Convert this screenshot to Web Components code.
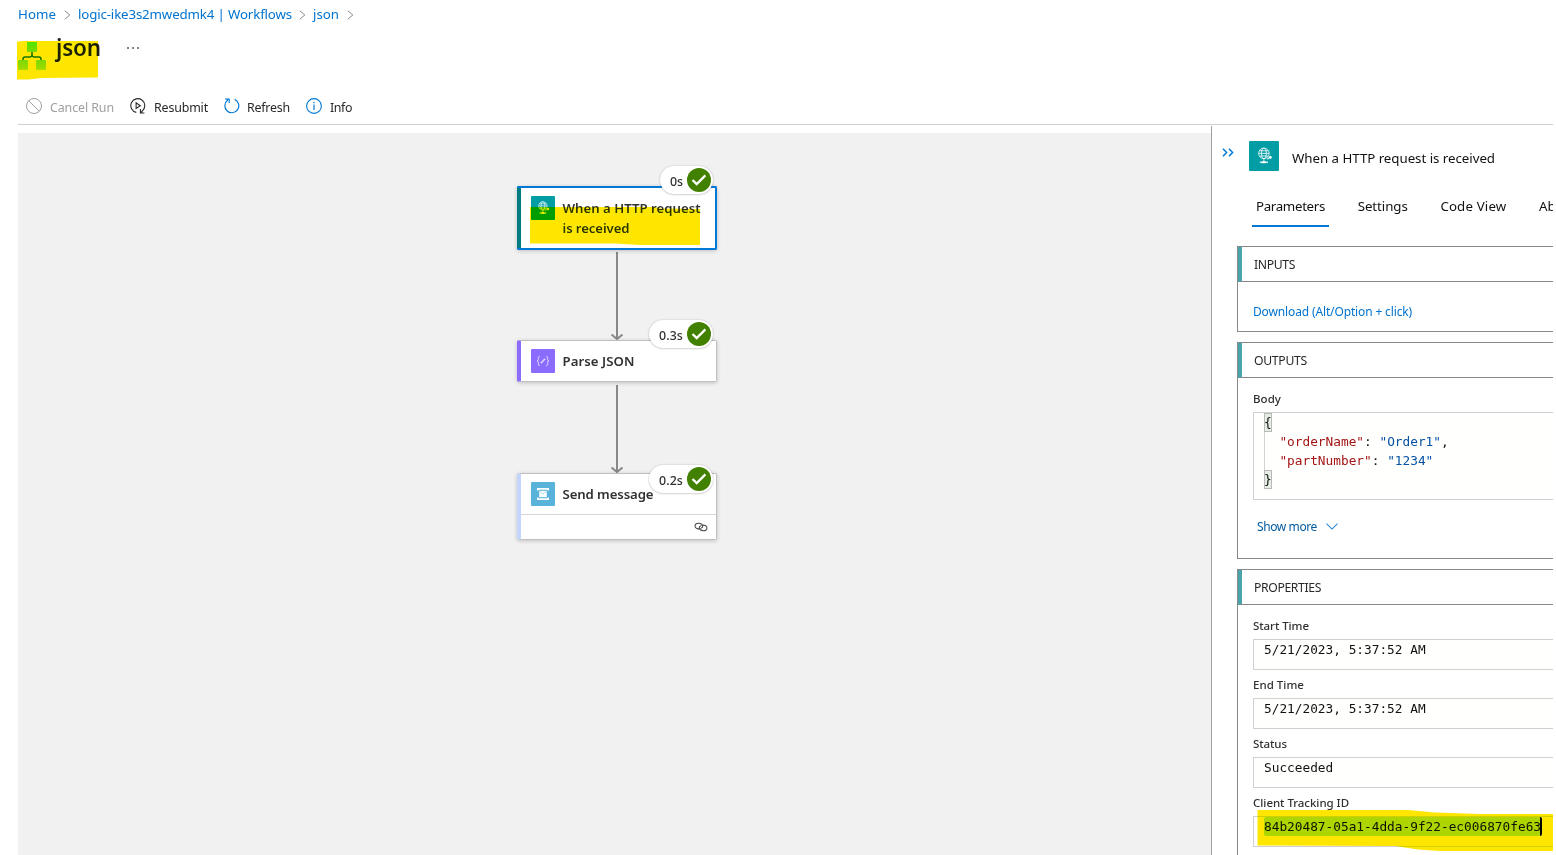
<!DOCTYPE html>
<html lang="en">
<head>
<meta charset="utf-8">
<title>json - Workflow run</title>
<style>
html,body{margin:0;padding:0;background:#fff}
body{width:1556px;height:855px;overflow:hidden;font-family:"Noto Sans","Open Sans",sans-serif;color:#323130}
</style>
</head>
<body>
<run-page></run-page>
<script>
const define = (name, html, setup) => customElements.define(name, class extends HTMLElement {
  connectedCallback() {
    if (this.shadowRoot) return;
    const root = this.attachShadow({mode: 'open'});
    const t = document.createElement('template');
    t.innerHTML = typeof html === 'function' ? html(this) : html;
    root.append(t.content.cloneNode(true));
    if (setup) setup(this, root);
  }
});

/* Single line of text, tracked so that it spans the width given in "w". */
define('fit-text', '<style>:host{display:inline-block;white-space:nowrap}</style><slot></slot>', el => {
  const w = +el.getAttribute('w');
  if (!w) return;
  const natural = el.getBoundingClientRect().width;
  const n = el.textContent.length;
  el.style.letterSpacing = ((w - natural) / n).toFixed(3) + 'px';
  el.style.width = w + 'px';
});

const globe = `<g fill="none" stroke="#fff" stroke-opacity=".9" stroke-width=".7"><circle cx="11.9" cy="9.9" r="4.2"/><ellipse cx="11.9" cy="9.9" rx="1.9" ry="4.2"/><path d="M7.7 9.9h8.4M8.4 7.8h7M8.4 12h7M11.9 14.1v2.6"/><path d="M8.6 17h6.6" stroke-width="1.1"/><path d="M14.6 14.6l2.8-2.3" stroke-width=".9"/></g><circle cx="17.1" cy="13.1" r="1.1" fill="#fff"/><path d="M10.5 16.2h2.8v1.6h-2.8z" fill="#fff"/>`;
const icons = {
  cancel: ['16 16', '<g fill="none" stroke="#a19f9d"><circle cx="8" cy="8" r="7.5"/><path d="M2.7 2.7l10.6 10.6"/></g>'],
  resubmit: ['17 17', '<g fill="none" stroke="#292827" stroke-width="1.15"><path d="M6.7 15.3A7.4 7.4 0 1 1 13.2 13.6l-1.6 1.9M15.3 16h-4.2v-4.2"/><path d="M6.5 5.2v6l4.4-3z"/></g>'],
  refresh: ['17 17', '<g fill="none" stroke="#0078d4" stroke-width="1.25"><path d="M11.3 1.5A7.4 7.4 0 1 1 4.1 2.2M1.3 1.2h4.2v4.2"/></g>'],
  info: ['16 16', '<circle cx="8" cy="8" r="7.4" fill="none" stroke="#0078d4" stroke-width="1.1"/><path d="M8 6.5v5.6M8 3.8v1.4" stroke="#0078d4" stroke-width="1.2"/>'],
  chev: ['7 10', '<path d="M.8.8L5.8 5 .8 9.2" fill="none" stroke="#8a8886" stroke-width="1"/>'],
  down: ['12 7', '<path d="M.5.7L6 6.1 11.5.7" fill="none" stroke="#2b88d8" stroke-width="1.1"/>'],
  collapse: ['12 9', '<path d="M1 .7L4.6 4.5 1 8.3M7 .7l3.6 3.8L7 8.3" fill="none" stroke="#0078d4" stroke-width="1.5"/>'],
  link: ['14 10', '<g fill="none" stroke="#484644" stroke-width="1.05"><path d="M6.600 6.600C4 7.400 1 6.200 1 3.900 1 1.900 3 1.200 4.800 1.300 7 1.400 8.800 2.600 8.700 4.400 8.650 5.200 8 5.900 7.200 6.300"/><path d="M7.600 3.400C10 2.600 13 3.800 13 6.100 13 8.100 11 8.800 9.200 8.700 7 8.600 5.200 7.400 5.300 5.600 5.350 4.800 6 4.100 6.800 3.700"/></g>'],
  http: ['24 24', '<rect width="24" height="24" rx="1" fill="#009da5"/>' + globe],
  parse: ['24 24', '<rect width="24" height="24" rx="1" fill="#8c6cff"/><g fill="none" stroke="#fff" stroke-opacity=".75" stroke-width=".9"><path d="M8.800 7.400c-2 0-1.400 1.300-1.400 2.700 0 1.200-.4 1.900-1.400 1.900 1 0 1.400.7 1.400 1.900 0 1.400-.6 2.700 1.400 2.700M15.200 7.400c2 0 1.400 1.300 1.400 2.700 0 1.200.4 1.900 1.400 1.900-1 0-1.400.7-1.400 1.900 0 1.400.6 2.700-1.400 2.700"/><path d="M9.800 14.200l4.300-4.400" stroke-width="1.500"/></g>'],
  bus: ['24 24', '<rect width="24" height="24" rx="1" fill="#59b2d9"/><path d="M6.800 8.600V6.900h10.400v1.700M6.800 15.400v1.700h10.400v-1.700" fill="none" stroke="#fff" stroke-width="1.600"/><path d="M8.200 8.800h7.600v6.400H8.200z" fill="#fff"/><path d="M8.400 9.200l3.600 2.900 3.600-2.900" fill="none" stroke="#59b2d9" stroke-width=".5"/>'],
  check: ['24 24', '<circle cx="12" cy="12" r="12" fill="#428000"/><path d="M5.500 12l4.200 4.100 8.700-8.700" fill="none" stroke="#fff" stroke-width="2.300"/>'],
  flow: ['28 28', '<defs><linearGradient id="t" x2="0" y2="1"><stop stop-color="#4be61e"/><stop offset="1" stop-color="#7dd81e"/></linearGradient><linearGradient id="b" x2="0" y2="1"><stop stop-color="#78d81e"/><stop offset="1" stop-color="#a8dc1e"/></linearGradient></defs><path d="M14 10v4M5 18.500v-1.500q0-2 2-2h4.500q2.500 0 2.500-2 0 2 2.500 2H21q2 0 2 2v1.500" fill="none" stroke="#156b12" stroke-width="1.500"/><rect x="9" width="10" height="10" rx=".7" fill="url(#t)"/><rect y="18" width="10" height="10" rx=".7" fill="url(#b)"/><rect x="18" y="18" width="10" height="10" rx=".7" fill="url(#b)"/>']
};
define('ui-icon', el => {
  const [vb, body] = icons[el.getAttribute('name')];
  const [vw, vh] = vb.split(' ');
  const w = el.getAttribute('w') || vw, h = el.getAttribute('h') || vh;
  return `<style>:host{display:block;flex:none;width:${w}px;height:${h}px}svg{display:block}</style><svg width="${w}" height="${h}" viewBox="0 0 ${vb}">${body}</svg>`;
});

define('bread-crumbs', `<style>
:host{display:flex;align-items:center;height:28px;padding-left:18px;font-size:13.3px;color:#0073cf}
ui-icon{margin-top:2px}
</style>
<fit-text w="38">Home</fit-text><ui-icon name="chev" style="margin-left:8px;margin-right:7px"></ui-icon>
<fit-text w="214">logic-ike3s2mwedmk4 | Workflows</fit-text><ui-icon name="chev" style="margin-left:7px;margin-right:7px"></ui-icon>
<fit-text w="26">json</fit-text><ui-icon name="chev" style="margin-left:8px"></ui-icon>`);

define('page-title', `<style>
:host{display:flex;align-items:flex-start;height:61px;padding-left:18px}
ui-icon{margin-top:14px}
h1{margin:2px 0 0 10px;font-size:22.5px;font-weight:600;line-height:36px;color:#1f1e1d}
.more{display:flex;gap:3px;margin:19px 0 0 26px}
.more i{width:2px;height:2px;border-radius:1px;background:#605e5c}
</style>
<ui-icon name="flow"></ui-icon><h1><fit-text w="45">json</fit-text></h1><span class="more"><i></i><i></i><i></i></span>`);

define('tool-button', el => `<style>
:host{display:flex;align-items:center;gap:8px;font-size:12.4px;color:#292827}
:host([off]){color:#a19f9d}
.text{padding-top:1.5px}
</style><ui-icon name="${el.getAttribute('icon')}" w="16" h="16" style="margin-top:-2px"></ui-icon><div class="text"><slot></slot></div>`);

define('tool-bar', `<style>
:host{display:flex;box-sizing:border-box;height:36px;margin:0 3px 0 18px;padding:0 0 0 8px;border-bottom:1px solid #d2d0ce;gap:16px}
</style>
<tool-button off icon="cancel"><fit-text w="64">Cancel Run</fit-text></tool-button>
<tool-button icon="resubmit"><fit-text w="54">Resubmit</fit-text></tool-button>
<tool-button icon="refresh" style="gap:7px"><fit-text w="43">Refresh</fit-text></tool-button>
<tool-button icon="info"><fit-text w="22">Info</fit-text></tool-button>`);

define('run-badge', `<style>
:host{position:absolute;right:3px;top:-21px;box-sizing:border-box;height:28px;border-radius:14px;display:flex;align-items:center;gap:4px;padding:0 2px 0 10px;background:#fff;box-shadow:0 0 2px rgba(0,0,0,.22),0 1px 2px rgba(0,0,0,.12);font-size:12.4px;font-weight:500;color:#323130}
::slotted(*){margin-top:2px}
</style><slot></slot><ui-icon name="check"></ui-icon>`);

define('flow-node', el => `<style>
:host{display:block;position:relative;box-sizing:border-box;width:200px;background:#fff;border:1px solid #c2c0be;border-left:4px solid var(--brand);border-radius:2px;box-shadow:0 1px 4px rgba(0,0,0,.2)}
:host([selected]){border-color:#0078d4;border-width:2px;border-left:0}
:host([selected])::before{content:"";position:absolute;left:0;top:-2px;bottom:-2px;width:4px;box-sizing:border-box;background:var(--brand);border:solid #0078d4;border-width:2px 0 2px 0;border-radius:2px 0 0 2px}
.main{display:flex;box-sizing:border-box;min-height:40px;padding:8px 0 8px 10px;gap:7.5px}
:host([selected]) .main{padding-left:14px;min-height:60px}
.name{font-size:13.2px;font-weight:600;line-height:20px;margin-top:2px;color:#323130;display:flex;flex-direction:column;align-items:flex-start}
</style><div class="main"><ui-icon name="${el.getAttribute('icon')}"></ui-icon><div class="name"><slot></slot></div></div><slot name="foot"></slot><slot name="badge"></slot>`);

define('flow-edge', el => {
  const h = +el.getAttribute('h');
  return `<style>:host{display:block;margin-left:93px}svg{display:block}</style><svg width="14" height="${h}"><path d="M7 ${el.getAttribute('from') || 2}V${h - 1}" stroke="#8a8886" stroke-width="2"/><path d="M1.500 ${h - 5.5}L7 ${h - 1}l5.500-4.500" fill="none" stroke="#8a8886" stroke-width="2"/></svg>`;
});

define('node-foot', `<style>:host{display:flex;box-sizing:border-box;height:25px;border-top:1px solid #d8d6d4;align-items:center;justify-content:flex-end;padding-right:8.5px}</style><ui-icon name="link"></ui-icon>`);

define('flow-canvas', `<style>
:host{display:block;box-sizing:border-box;margin:8px 0 0 18px;width:1193px;height:722px;background:#f1f1f1;padding:53px 0 0 499px}
</style>
<flow-node selected icon="http" style="--brand:#007c84"><fit-text w="138">When a HTTP request</fit-text><fit-text w="67">is received</fit-text><run-badge slot="badge" style="right:2px;top:-22px"><fit-text w="13">0s</fit-text></run-badge></flow-node>
<flow-edge h="90"></flow-edge>
<flow-node icon="parse" style="--brand:#8c6cff"><fit-text w="72">Parse JSON</fit-text><run-badge slot="badge"><fit-text w="24">0.3s</fit-text></run-badge></flow-node>
<flow-edge h="91" from="3"></flow-edge>
<flow-node icon="bus" style="--brand:#c4d5ff"><fit-text w="91">Send message</fit-text><node-foot slot="foot"></node-foot><run-badge slot="badge" style="top:-9px"><fit-text w="24">0.2s</fit-text></run-badge></flow-node>`);

define('panel-header', `<style>
:host{display:flex;height:61px;padding-left:10px;align-items:flex-start;color:#111}
.t{font-size:13.3px;line-height:20px;margin:22px 0 0 13px}
</style><ui-icon name="collapse" style="margin-top:21.500px"></ui-icon><ui-icon name="http" w="30" h="30" style="margin:15px 0 0 15px"></ui-icon><fit-text class="t" w="203">When a HTTP request is received</fit-text>`);

define('tab-item', `<style>
:host{display:block;flex:none;box-sizing:border-box;height:40px;padding:0 4px;line-height:38px;font-size:13.3px;color:#111;border-bottom:2px solid transparent}
:host([active]){border-color:#0078d4}
</style><slot></slot>`);
define('tab-list', `<style>:host{display:flex;gap:24.700px;padding-left:40px;height:40px;overflow:hidden}</style>
<tab-item active><fit-text w="69">Parameters</fit-text></tab-item>
<tab-item><fit-text w="50">Settings</fit-text></tab-item>
<tab-item><fit-text w="66">Code View</fit-text></tab-item>
<tab-item><fit-text w="38">About</fit-text></tab-item>`);

define('panel-section', `<style>
:host{display:block;box-sizing:border-box;margin-left:25px;border:1px solid #8a8886;border-right:0}
header{box-sizing:border-box;height:35px;border-bottom:1px solid #8a8886;border-left:4px solid #4aa3ab;padding-left:12px;font-size:12.2px;line-height:35px;color:#292827}
.body{padding-left:15px}
</style><header><slot name="head"></slot></header><div class="body"><slot></slot></div>`);

define('value-field', `<style>
:host{display:block;padding-bottom:4px}
.label{display:block;height:24px;line-height:22px;font-size:11.5px;font-weight:500;color:#323130}
.box{box-sizing:border-box;min-height:31px;border:1px solid #d0d0d0;border-right:0;background:#fffffe;padding:0 0 0 10px;font:12.790px/19px "DejaVu Sans Mono","Liberation Mono",monospace;color:#111}
</style><span class="label"><slot name="label"></slot></span><div class="box"><slot></slot></div>`);

define('json-code', `<style>
:host{display:block;height:86px;white-space:pre}
div{height:19px}
.in{box-shadow:inset 1px 0 #d3d3d3}
.k{color:#a31515}.v{color:#0451a5}
.b{display:inline-block;box-sizing:border-box;width:8px;height:19px;background:#e4eee2;box-shadow:inset 0 0 0 1px #b9b9b9}
</style><div><span class="b">{</span></div><div class="in">  <span class="k">"orderName"</span>: <span class="v">"Order1"</span>,</div><div class="in">  <span class="k">"partNumber"</span>: <span class="v">"1234"</span></div><div><span class="b">}</span></div>`);

define('selected-text', `<style>:host{display:block;box-sizing:border-box;width:278px;height:19px;white-space:nowrap;background:#add6ff;border-radius:2px;border-right:2px solid #000}</style><slot></slot>`);

define('show-more', `<style>:host{display:flex;align-items:center;gap:9px;height:20px;padding:12px 0 22px 4px;font-size:12px;color:#005ba1}</style><fit-text w="60">Show more</fit-text><ui-icon name="down"></ui-icon>`);

define('detail-panel', `<style>
:host{display:block;box-sizing:border-box;width:342px;height:729px;margin-top:1px;border-left:1px solid #a19f9d;overflow:hidden}
panel-section{margin-top:10px}
.link{display:flex;font-size:12px;line-height:20px;color:#0073cf;padding:20px 0 9px}
</style>
<panel-header></panel-header><tab-list></tab-list>
<panel-section style="margin-top:19px"><fit-text slot="head" w="41">INPUTS</fit-text><div class="link"><fit-text w="159">Download (Alt/Option + click)</fit-text></div></panel-section>
<panel-section><fit-text slot="head" w="53">OUTPUTS</fit-text>
<value-field style="padding-top:10px"><fit-text slot="label" w="28">Body</fit-text><json-code></json-code></value-field><show-more></show-more></panel-section>
<panel-section style="padding-bottom:16px"><fit-text slot="head" w="67">PROPERTIES</fit-text>
<value-field style="padding-top:10px"><fit-text slot="label" w="56">Start Time</fit-text>5/21/2023, 5:37:52 AM</value-field>
<value-field><fit-text slot="label" w="51">End Time</fit-text>5/21/2023, 5:37:52 AM</value-field>
<value-field><fit-text slot="label" w="34">Status</fit-text>Succeeded</value-field>
<value-field><fit-text slot="label" w="96">Client Tracking ID</fit-text><selected-text>84b20487-05a1-4dda-9f22-ec006870fe63</selected-text></value-field>
</panel-section>`);

/* Hand-drawn marker strokes laid over the page. */
define('marker-layer', `<style>:host{position:absolute;inset:0;mix-blend-mode:darken;pointer-events:none}svg{display:block}</style>
<svg width="1556" height="855" fill="#ffe600">
<path d="M17 41.500L24 41H98V77.500L42 78 28 79.500H17z"/>
<path d="M530 207H655L660 208.500 700 209V245H640L615 243.500H530z"/>
<path d="M1257.500 810H1408L1435 812.500 1480 814H1553V851H1440L1418 849.500 1395 846 1257.500 845.500z"/>
</svg>`);

define('run-page', `<style>:host{display:block;position:relative;width:1556px;height:855px;overflow:hidden;background:#fff}main{display:flex}</style>
<bread-crumbs></bread-crumbs><page-title></page-title><tool-bar></tool-bar>
<main><flow-canvas></flow-canvas><detail-panel></detail-panel></main><marker-layer></marker-layer>`);
</script>
</body>
</html>
